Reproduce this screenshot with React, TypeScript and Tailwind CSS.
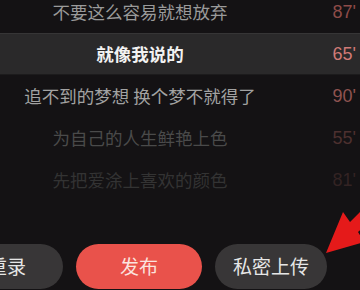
const lines = [
  { text: "不要这么容易就想放弃", time: "87'", tone: "text-[#9a9a9a]", num: "text-[#8e4b48]" },
  { text: "就像我说的", time: "65'", tone: "text-[#f2f2f2] font-bold", num: "text-[#d07a76]", active: true },
  { text: "追不到的梦想 换个梦不就得了", time: "90'", tone: "text-[#a2a2a2]", num: "text-[#8f5350]" },
  { text: "为自己的人生鲜艳上色", time: "55'", tone: "text-[#4a4a4a]", num: "text-[#4d302f]" },
  { text: "先把爱涂上喜欢的颜色", time: "81'", tone: "text-[#333333]", num: "text-[#332323]" },
];

export default function App() {
  return (
    <div className="relative w-[360px] h-[290px] overflow-hidden bg-[#141214] font-['Noto_Sans_CJK_SC',sans-serif]">
      <div className="-mt-[9px] flex flex-col">
        {lines.map((l) => (
          <div
            key={l.text}
            className={`flex h-[42px] items-center ${l.active ? "bg-[#2a292a] border-t border-[#363536] border-b border-b-[#1c1b1c]" : ""}`}
          >
            <div className={`w-[280px] text-center text-[17.5px] leading-none ${l.tone}`}>{l.text}</div>
            <div className={`flex-1 pr-[4px] text-right text-[18px] leading-none font-['Liberation_Sans',sans-serif] ${l.num}`}>
              {l.time}
            </div>
          </div>
        ))}
      </div>

      <div className="mt-[43px] -ml-[49px] flex gap-[13px]">
        <div className="flex h-[45px] w-[112px] items-center justify-center rounded-full bg-[#383637] text-[19px] text-[#e6e6e6]">
          重录
        </div>
        <div className="flex h-[45px] w-[126px] items-center justify-center rounded-full bg-[#e9524b] text-[19px] text-[#fbe3df]">
          发布
        </div>
        <div className="flex h-[45px] w-[112px] items-center justify-center rounded-full bg-[#383637] text-[19px] text-[#e6e6e6]">
          私密上传
        </div>
      </div>

      <svg className="absolute left-0 top-0" width="360" height="290" viewBox="0 0 360 290">
        <polygon points="326,253 343,212 350,222 372,200 380,212 358,232 364,242" fill="#e51a1a" />
      </svg>
    </div>
  );
}
